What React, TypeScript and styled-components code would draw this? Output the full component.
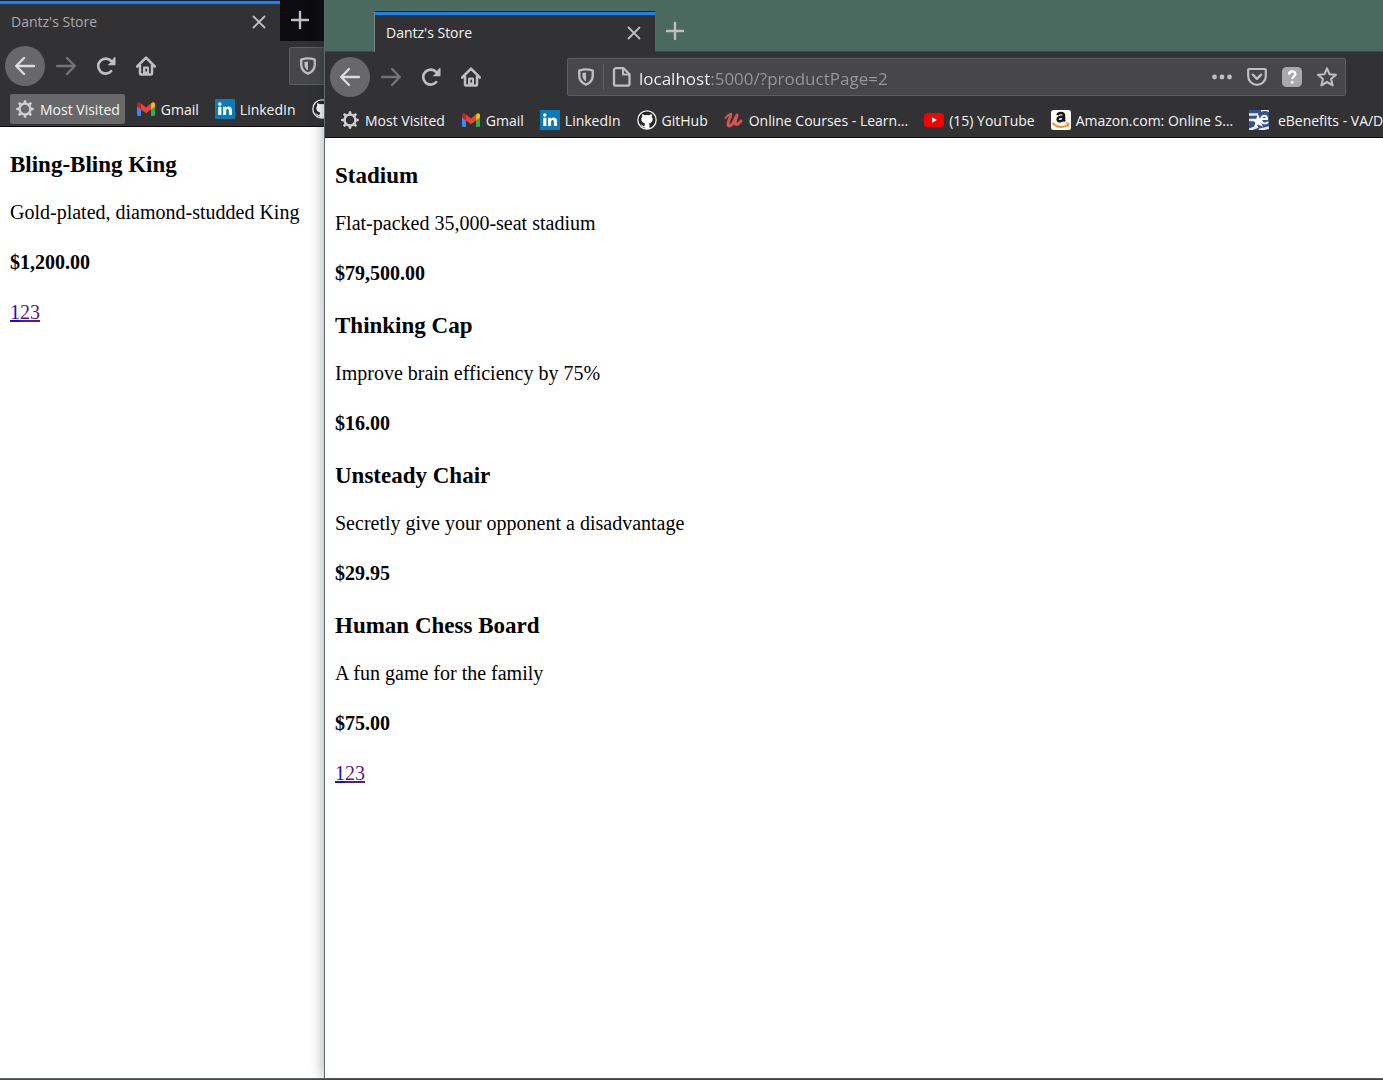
import React from "react";
import styled, { createGlobalStyle, css } from "styled-components";

const ui = `"Open Sans", "Noto Sans", sans-serif`;
const serif = `"Liberation Serif", "Times New Roman", serif`;
const chrome = "#323234";

const GlobalStyle = createGlobalStyle`
  *, *::before, *::after { box-sizing: border-box; }
  body { margin: 0; background: #4a695f; overflow: hidden; }
  button, input { font: inherit; color: inherit; margin: 0; }
  h3, h4, p { margin: 0; }
`;

const Desktop = styled.div`
  display: grid;
  grid-template-columns: 324px minmax(0, 1fr);
  grid-template-rows: minmax(0, 1fr) 2px;
  height: 100vh;
  font-family: ${ui};
`;

const Taskbar = styled.div`
  grid-column: 1 / -1;
  background: #434b4b;
  border-top: 1px solid #5c6664;
`;

const Window = styled.section<{ $front?: boolean }>`
  display: flex;
  flex-direction: column;
  min-width: 0;
  overflow: hidden;
  background: #fff;
  ${(p) =>
    p.$front &&
    css`
      z-index: 1;
      border-left: 1px solid #5f6b69;
      box-shadow: 0 0 14px rgba(20, 40, 40, 0.4);
    `}
`;

const TabStrip = styled.div<{ $front?: boolean }>`
  display: flex;
  flex: none;
  height: ${(p) => (p.$front ? 52 : 41)}px;
  padding: ${(p) => (p.$front ? "11px 0 0 49px" : "0")};
  background: ${(p) => (p.$front ? "#4a695f" : "#0c0c0f")};
  border-bottom: ${(p) => (p.$front ? "1px solid #3b4a46" : "0")};
`;

const Tab = styled.div<{ $front?: boolean }>`
  display: flex;
  align-items: center;
  justify-content: space-between;
  width: ${(p) => (p.$front ? 281 : 280)}px;
  flex: none;
  margin-bottom: ${(p) => (p.$front ? -1 : 0)}px;
  padding: 2px 11px 0 11px;
  background: ${chrome};
  border-top: 1px solid #12204a;
  border-left: ${(p) => (p.$front ? "1px solid #6f8a82" : "0")};
  box-shadow: inset 0 3px #1b82e8;
  color: ${(p) => (p.$front ? "#f4f4f5" : "#a9a9ab")};
  font-size: 14px;
  line-height: 20px;
`;

const IconButton = styled.button<{ $width?: number; $height?: number; $round?: boolean }>`
  display: grid;
  place-items: center;
  flex: none;
  width: ${(p) => p.$width ?? 40}px;
  height: ${(p) => p.$height ?? 40}px;
  margin-right: ${(p) => (p.$round ? 1 : 0)}px;
  padding: 0;
  border: 0;
  border-radius: ${(p) => (p.$round ? "50%" : "0")};
  background: ${(p) => (p.$round ? "#68686a" : "none")};
  color: #bfbfc1;
`;

const NavBar = styled.div`
  display: flex;
  align-items: center;
  flex: none;
  height: 50px;
  padding: 0 37px 0 5px;
  background: ${chrome};
`;

const AddressBar = styled.div<{ $offset: number }>`
  display: flex;
  align-items: center;
  flex: 1 0 auto;
  height: 38px;
  margin-left: ${(p) => p.$offset}px;
  padding-right: 1px;
  border: 1px solid #5b5f60;
  border-radius: 2px;
  background: #474749;
`;

const Divider = styled.span`
  width: 1px;
  height: 26px;
  background: #626264;
`;

const UrlInput = styled.input`
  flex: 1;
  min-width: 0;
  height: 32px;
  padding: 2px 0 0;
  border: 0;
  outline: 0;
  font-size: 17px;
  color: transparent;
  background: linear-gradient(to right, #f9f9fa 71px, #98989a 71px);
  background-clip: text;
  -webkit-background-clip: text;
`;

const BookmarkBar = styled.nav`
  display: flex;
  align-items: center;
  gap: 6px;
  flex: none;
  height: 36px;
  padding: 0 0 0 10px;
  overflow: hidden;
  background: ${chrome};
  border-bottom: 1px solid #0c0c0d;
`;

const Bookmark = styled.button<{ $active?: boolean }>`
  display: flex;
  align-items: center;
  gap: 5px;
  flex: none;
  height: 30px;
  padding: 0 5px;
  border: 0;
  border-radius: 2px;
  background: ${(p) => (p.$active ? "#68686a" : "none")};
  color: #f4f4f5;
  font-size: 14px;
  line-height: 20px;
  white-space: pre;
`;

const BookmarkLabel = styled.span`
  padding-top: 2px;
`;

const Page = styled.main`
  flex: 1;
  padding: 24px 10px;
  font-family: ${serif};
  font-size: 20px;
  line-height: 22px;
  color: #000;
`;

const Product = styled.article`
  margin-bottom: 28px;
`;

const ProductName = styled.h3`
  margin-bottom: 22px;
  font-size: 23px;
  line-height: 28px;
`;

const Description = styled.p`
  margin-bottom: 28px;
  white-space: nowrap;
`;

const Price = styled.h4`
  font-size: 20px;
`;

const PageLink = styled.a<{ $visited?: boolean }>`
  color: ${(p) => (p.$visited ? "#551a8b" : "#1a0dc8")};
  text-decoration: underline;
`;

const Svg = ({ size = 20, children }: { size?: number; children: React.ReactNode }) => (
  <svg width={size} height={size} viewBox="0 0 20 20" fill="none" aria-hidden="true">
    {children}
  </svg>
);

const line = { stroke: "currentColor", strokeWidth: 2.2, strokeLinecap: "round", strokeLinejoin: "round" } as const;

const CloseIcon = () => (
  <Svg><path d="M4.5 4.5l11 11M15.5 4.5l-11 11" {...line} strokeWidth={1.8} /></Svg>
);
const PlusIcon = () => (
  <Svg><path d="M10 2v16M2 10h16" {...line} strokeWidth={2.4} /></Svg>
);
const BackIcon = () => (
  <Svg><path d="M19 10H1.500M9 2L1.200 10L9 18" {...line} strokeWidth={2.4} stroke="#dcdcdd" /></Svg>
);
const ForwardIcon = () => (
  <Svg><path d="M1 10h17.500M11 2l7.800 8L11 18" {...line} strokeWidth={2.4} stroke="#747476" /></Svg>
);
const ReloadIcon = () => (
  <Svg>
    <path d="M15.200 15.200a7.500 7.500 0 1 1 0-10.200" {...line} strokeWidth={2.6} />
    <path d="M19.500 1.200v7.400a.6.6 0 0 1-.6.6h-7.400l3-2.700 3.600-5.300z" fill="currentColor" />
  </Svg>
);
const HomeIcon = () => (
  <Svg>
    <path d="M1.200 10.500L10 1.600l8.800 8.900M4 9v8.500a1 1 0 0 0 1 1h10a1 1 0 0 0 1-1V9" {...line} strokeWidth={2.5} />
    <path d="M7 18v-6.500a1 1 0 0 1 1-1h4a1 1 0 0 1 1 1V18z" fill="currentColor" />
    <path d="M10.200 12.800v2.700" stroke={chrome} strokeWidth="1.600" />
  </Svg>
);
const ShieldIcon = () => (
  <Svg size={18}>
    <path d="M10 1.500c2.500 0 5 .5 7.500 1.300v5.700c0 4.500-3 8-7.500 10c-4.500-2-7.500-5.500-7.500-10V2.800C5 2 7.500 1.500 10 1.500z" {...line} strokeWidth={2.6} />
    <path d="M10 5v10c-2.500-1.500-4-3.700-4-6.500V5.500z" fill="currentColor" />
  </Svg>
);
const PageIcon = () => (
  <Svg>
    <path d="M4 1.200h7.500l6 6v9.500a2 2 0 0 1-2 2H4a2 2 0 0 1-2-2V3.200a2 2 0 0 1 2-2z" {...line} strokeWidth={2.3} />
    <path d="M11 1.500v6h6" {...line} strokeWidth={2} />
  </Svg>
);
const DotsIcon = () => (
  <Svg>
    <circle cx="2.500" cy="10" r="2.400" fill="currentColor" />
    <circle cx="10" cy="10" r="2.400" fill="currentColor" />
    <circle cx="17.500" cy="10" r="2.400" fill="currentColor" />
  </Svg>
);
const PocketIcon = () => (
  <Svg>
    <path d="M2 2h16a.8.8 0 0 1 .8.8V9a8.800 8.800 0 0 1-17.600 0V2.800A.8.8 0 0 1 2 2z" {...line} />
    <path d="M5.800 7.700L10 11.800l4.200-4.100" {...line} strokeWidth={2.400} />
  </Svg>
);
const HelpIcon = () => (
  <Svg>
    <rect width="20" height="20" rx="4.500" fill="#a9a9ab" />
    <path d="M7 7.500c0-4 6.300-4 6.300-.4c0 2.300-3 2.400-3 5" stroke="#fff" strokeWidth="2.400" />
    <circle cx="10.200" cy="15.300" r="1.500" fill="#fff" />
  </Svg>
);
const StarIcon = () => (
  <Svg>
    <path d="M10 1.400l2.500 5.800 6.400.6-4.800 4.200 1.500 6.400L10 15l-5.600 3.400 1.500-6.400L1.100 7.800l6.400-.6z" {...line} strokeWidth={2.1} />
  </Svg>
);
const GearIcon = () => (
  <Svg>
    <circle cx="10" cy="10" r="5.400" stroke="#cfcfd0" strokeWidth="2.300" />
    {[0, 45, 90, 135, 180, 225, 270, 315].map((a) => (
      <path key={a} d="M8.300 4.500L8.900 1.200h2.200l.6 3.300z" fill="#cfcfd0" transform={`rotate(${a} 10 10)`} />
    ))}
  </Svg>
);
const GmailIcon = () => (
  <Svg>
    <path d="M1 5v10.500A1.500 1.500 0 0 0 2.500 17H5V8z" fill="#4285f4" />
    <path d="M19 5v10.500a1.500 1.500 0 0 1-1.500 1.500H15V8z" fill="#34a853" />
    <path d="M15 4.500l1-.8c1.300-.9 3-.2 3 1.500v2.300l-4 3z" fill="#fbbc04" />
    <path d="M5 4.500l-1-.8C2.700 2.800 1 3.500 1 5.200v2.300l4 3z" fill="#c5221f" />
    <path d="M5 4.500l5 3.900 5-3.900v6l-5 3.800-5-3.800z" fill="#ea4335" />
  </Svg>
);
const LinkedInIcon = () => (
  <Svg>
    <rect width="20" height="20" rx="1" fill="#0b7ab8" />
    <circle cx="4.800" cy="5" r="1.800" fill="#fff" />
    <path d="M3.200 7.800h3.200V16H3.200zM8 7.800h3v1.100c1.500-2.200 6-1.900 6 2.100v5h-3.100v-4.300c0-2.200-2.800-2.100-2.800 0V16H8z" fill="#fff" />
  </Svg>
);
const GitHubIcon = () => (
  <Svg>
    <circle cx="10" cy="10" r="9.800" fill="#f2f2f2" />
    <circle cx="10" cy="10" r="8.500" fill="#252528" />
    <path d="M5.300 4.300c1 0 1.900.5 2.600 1a9 9 0 0 1 4.200 0c.7-.5 1.600-1 2.600-1c.4 1 .3 1.900.1 2.500c2 2.700.5 6.300-2.900 6.700c.5.6.6 1.200.6 2v3a8.500 8.500 0 0 1-5 0v-1.500c-2 .4-2.500-.6-3-1.500c-.3-.5-.6-.7-1-1c1.600-.5 1.900 1.500 3.100 1.500c.5 0 .8-.1 1-.2c0-.8.200-1.600.7-2.300c-3.500-.4-5.100-4-3.100-6.700c-.2-.8-.3-1.600.1-2.500z" fill="#fff" />
  </Svg>
);
const UdemyIcon = () => (
  <Svg>
    <path d="M1.500 8C3 6 4.500 4.600 6 4.200" stroke="#d9534f" strokeWidth="2" strokeLinecap="round" />
    <path d="M6.800 4.300C6.800 7.500 3.500 11.500 4 14.500c.4 2.600 3.200 1.300 4.700-.9c1.700-2.500 2.600-6 4.300-8.600c-.6 3.200-2.400 6.300-1.600 8.600c.7 1.800 3.500.4 5.600-2.600" stroke="#d9534f" strokeWidth="3" strokeLinecap="round" strokeLinejoin="round" />
  </Svg>
);
const YouTubeIcon = () => (
  <Svg>
    <rect x="0" y="3" width="20" height="14" rx="3.500" fill="#f60000" />
    <path d="M8 7.200l5 2.800-5 2.800z" fill="#fff" />
  </Svg>
);
const AmazonIcon = () => (
  <Svg>
    <rect width="20" height="20" rx="2.500" fill="#fff" />
    <path d="M6.500 5.200c.6-3 6.500-3.300 6.500.3v4c0 .8.300 1.200.9 1.900M12.500 6.500c-3.500 0-5.900.6-5.900 2.900c0 3.200 5.600 2.200 5.900-1.400" stroke="#161616" strokeWidth="2.500" />
    <path d="M2 13.500c4.500 4.500 11 4.500 15 1.300" stroke="#f79a1c" strokeWidth="2" strokeLinecap="round" />
    <path d="M14.500 13.300c1.500-.5 3-.5 3.500 0c.2 1-.5 2.600-1.400 3.500" stroke="#f79a1c" strokeWidth="1.200" />
  </Svg>
);
const BenefitsIcon = () => (
  <Svg>
    <path d="M0 0h20v20H0z" fill="#34508f" />
    <path d="M0 4.500h9M0 10h6M0 20l9-3.500M10 20l10-2.500" stroke="#e6ebf5" strokeWidth="2.600" />
    <path d="M12 1c3-1 6-1 8 .5" stroke="#e6ebf5" strokeWidth="1.500" />
    <path d="M9 4l1.800 4.500 4.700-.3-3.600 3.600 2 5.200-4.700-2.500L4.800 18l1.600-5.500L2.200 9.300l5.100-.5z" fill="#fff" />
    <path d="M12.500 9h5.500c0-4.500-5-4.300-5.800-.3c-.8 5 4 5.800 7 3.300" stroke="#fff" strokeWidth="2" />
  </Svg>
);

const bookmarks = [
  { label: "Most Visited", Icon: GearIcon },
  { label: "Gmail", Icon: GmailIcon },
  { label: "LinkedIn", Icon: LinkedInIcon },
  { label: "GitHub", Icon: GitHubIcon },
  { label: "Online Courses - Learn...", Icon: UdemyIcon },
  { label: "(15) YouTube", Icon: YouTubeIcon },
  { label: "Amazon.com: Online S...", Icon: AmazonIcon },
  { label: " eBenefits - VA/DoD", Icon: BenefitsIcon },
];

type Item = { name: string; description: string; price: string };

type BrowserProps = {
  front?: boolean;
  url: string;
  products: Item[];
};

const Browser = ({ front, url, products }: BrowserProps) => (
  <Window $front={front} aria-label="Dantz's Store">
    <TabStrip $front={front}>
      <Tab $front={front}>
        <span>Dantz's Store</span>
        <IconButton $width={20} $height={20} aria-label="Close tab"><CloseIcon /></IconButton>
      </Tab>
      <IconButton aria-label="New tab"><PlusIcon /></IconButton>
    </TabStrip>
    <NavBar>
      <IconButton $round aria-label="Back"><BackIcon /></IconButton>
      <IconButton aria-label="Forward"><ForwardIcon /></IconButton>
      <IconButton aria-label="Reload"><ReloadIcon /></IconButton>
      <IconButton aria-label="Home"><HomeIcon /></IconButton>
      <AddressBar $offset={front ? 76 : 123}>
        <IconButton $width={35} $height={36} aria-label="Tracking protection"><ShieldIcon /></IconButton>
        {front && (
          <>
            <Divider />
            <IconButton $width={35} $height={36} aria-label="Site information"><PageIcon /></IconButton>
            <UrlInput aria-label="Address" defaultValue={url} />
            <IconButton $width={35} $height={36} aria-label="Page actions"><DotsIcon /></IconButton>
            <IconButton $width={35} $height={36} aria-label="Save to Pocket"><PocketIcon /></IconButton>
            <IconButton $width={35} $height={36} aria-label="Help"><HelpIcon /></IconButton>
            <IconButton $width={35} $height={36} aria-label="Bookmark this page"><StarIcon /></IconButton>
          </>
        )}
      </AddressBar>
    </NavBar>
    <BookmarkBar aria-label="Bookmarks">
      {(front ? bookmarks : bookmarks.slice(0, 4)).map(({ label, Icon }, i) => (
        <Bookmark key={label} $active={!front && i === 0} aria-label={label}>
          <Icon />
          {(front || i < 3) && <BookmarkLabel>{label}</BookmarkLabel>}
        </Bookmark>
      ))}
    </BookmarkBar>
    <Page>
      {products.map((p) => (
        <Product key={p.name}>
          <ProductName>{p.name}</ProductName>
          <Description>{p.description}</Description>
          <Price>{p.price}</Price>
        </Product>
      ))}
      <PageLink href="#page1">1</PageLink>
      <PageLink href="#page2" $visited>2</PageLink>
      <PageLink href="#page3" $visited>3</PageLink>
    </Page>
  </Window>
);

export default function App() {
  return (
    <>
      <GlobalStyle />
      <Desktop>
        <Browser
          url="localhost:5000/?productPage=3"
          products={[
            { name: "Bling-Bling King", description: "Gold-plated, diamond-studded King", price: "$1,200.00" },
          ]}
        />
        <Browser
          front
          url="localhost:5000/?productPage=2"
          products={[
            { name: "Stadium", description: "Flat-packed 35,000-seat stadium", price: "$79,500.00" },
            { name: "Thinking Cap", description: "Improve brain efficiency by 75%", price: "$16.00" },
            { name: "Unsteady Chair", description: "Secretly give your opponent a disadvantage", price: "$29.95" },
            { name: "Human Chess Board", description: "A fun game for the family", price: "$75.00" },
          ]}
        />
        <Taskbar />
      </Desktop>
    </>
  );
}
